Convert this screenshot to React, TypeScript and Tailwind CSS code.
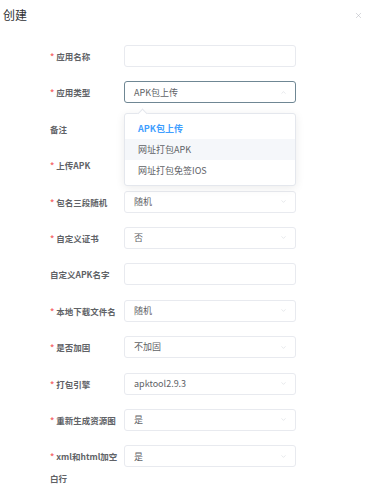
import { ChevronDown, ChevronUp, X } from 'lucide-react'

type Row = {
  label: string
  required?: boolean
  value?: string
  select?: boolean
  focused?: boolean
}

const ROWS: Row[] = [
  { label: '应用名称', required: true },
  { label: '应用类型', required: true, value: 'APK包上传', select: true, focused: true },
  { label: '备注' },
  { label: '上传APK', required: true },
  { label: '包名三段随机', required: true, value: '随机', select: true },
  { label: '自定义证书', required: true, value: '否', select: true },
  { label: '自定义APK名字' },
  { label: '本地下载文件名', required: true, value: '随机', select: true },
  { label: '是否加固', required: true, value: '不加固', select: true },
  { label: '打包引擎', required: true, value: 'apktool2.9.3', select: true },
  { label: '重新生成资源图', required: true, value: '是', select: true },
  { label: 'xml和html加空白行', required: true, value: '是', select: true },
]

const OPTIONS = ['APK包上传', '网址打包APK', '网址打包免签IOS']

function Field({ row }: { row: Row }) {
  return (
    <div className="flex items-start">
      <div className="w-[74px] shrink-0 pr-[4px] text-[8.5px] leading-[22px] font-semibold text-[#606266]">
        {row.required && <span className="text-[#f56c6c] mr-[2px]">*</span>}
        {row.label}
      </div>
      <div
        className={
          'w-[172px] h-[22px] shrink-0 flex items-center justify-between rounded-[3px] border bg-white pl-[9px] pr-[8px] ' +
          (row.focused ? 'border-[#6f8794]' : 'border-[#e8eaef]')
        }
      >
        <span className="text-[9px] text-[#606266]">{row.value}</span>
        {row.select &&
          (row.focused ? (
            <ChevronUp size={7} strokeWidth={1.5} className="text-[#c8ccd3]" />
          ) : (
            <ChevronDown size={7} strokeWidth={1.5} className="text-[#c8ccd3]" />
          ))}
      </div>
    </div>
  )
}

export default function App() {
  return (
    <div
      className="relative w-[369px] h-[500px] overflow-hidden bg-white"
      style={{ fontFamily: '"Noto Sans CJK SC", "Noto Sans", sans-serif' }}
    >
      {/* Header */}
      <div className="flex items-center justify-between pl-[3px] pr-[6px] pt-[6px]">
        <span className="text-[12px] leading-[18px] text-[#303133]">创建</span>
        <X size={9} strokeWidth={1.2} className="text-[#a8abb2]" />
      </div>

      {/* Form */}
      <div className="flex flex-col gap-[14.4px] pl-[50px] pt-[21px]">
        {ROWS.map((row) => (
          <Field key={row.label} row={row} />
        ))}
      </div>

      {/* Select dropdown */}
      <div className="absolute left-[124px] top-[113px] w-[172px] rounded-[3px] border border-[#e4e7ed] bg-white py-[4px] shadow-[0_2px_10px_rgba(0,0,0,0.08)]">
        <div className="absolute left-[14px] -top-[4px] h-[7px] w-[7px] rotate-45 border-l border-t border-[#e4e7ed] bg-white" />
        {OPTIONS.map((opt, i) => (
          <div
            key={opt}
            className={
              'h-[21px] flex items-center px-[13px] text-[9px] ' +
              (i === 0
                ? 'font-bold text-[#409eff]'
                : i === 1
                  ? 'bg-[#f5f7fa] text-[#606266]'
                  : 'text-[#606266]')
            }
          >
            {opt}
          </div>
        ))}
      </div>
    </div>
  )
}
